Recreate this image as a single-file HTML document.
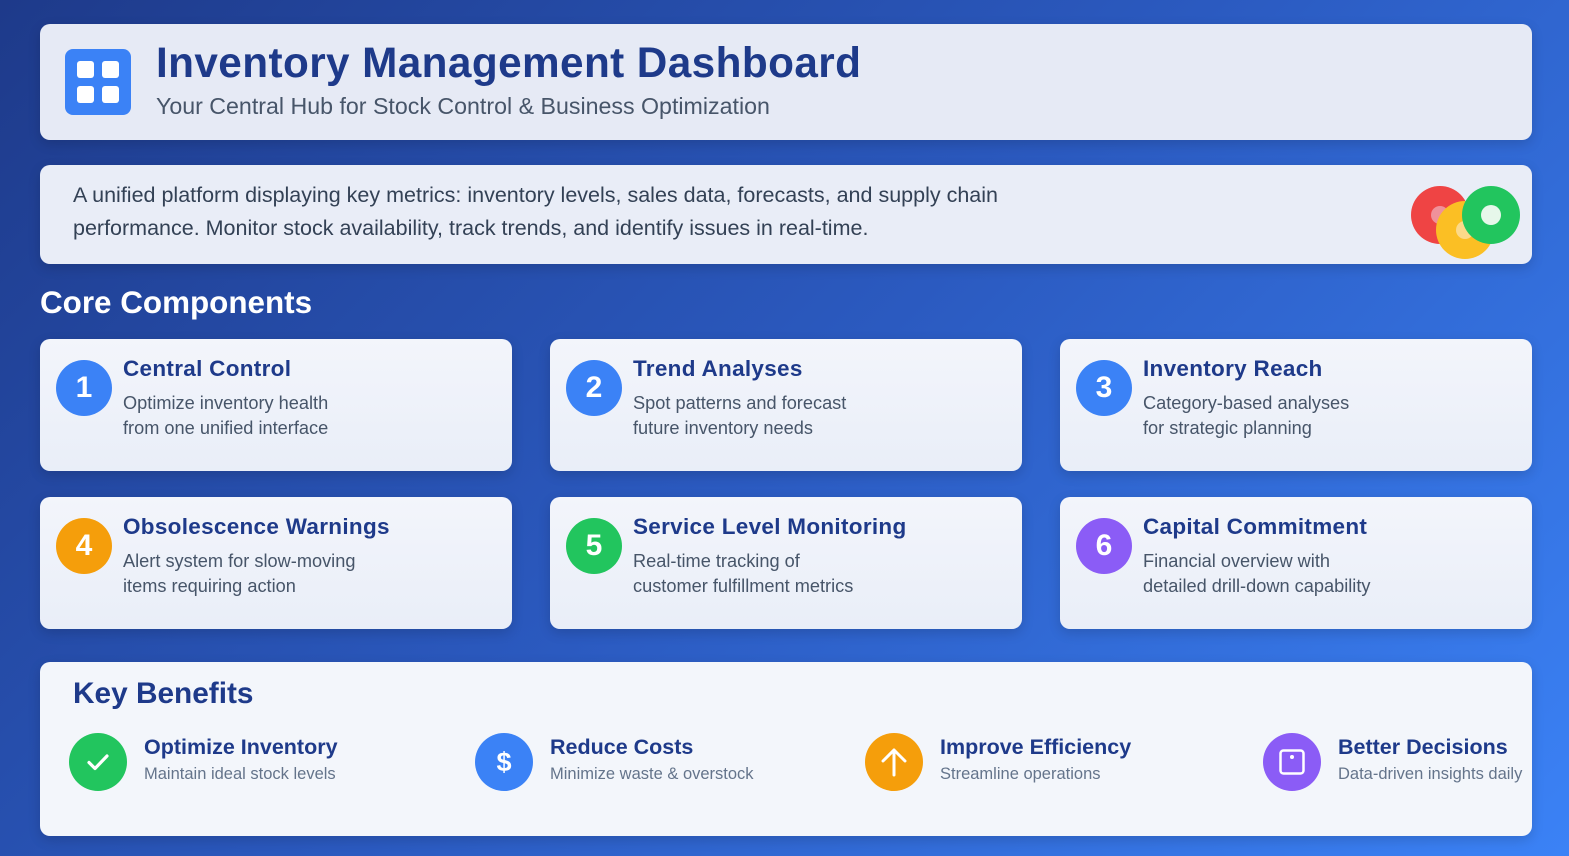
<!DOCTYPE html>
<html><head><meta charset="utf-8"><style>
*{margin:0;padding:0;box-sizing:border-box}
body{width:1569px;height:856px;overflow:hidden;font-family:"Liberation Sans",sans-serif;background:linear-gradient(135deg,#1e3a8a 0%,#2b5ac0 50%,#3b82f6 100%);position:relative}
.box{position:absolute;background:linear-gradient(180deg,#f3f5fb,#e9eef8);border-radius:10px;box-shadow:0 4px 12px rgba(0,0,0,.15)}
.abs{position:absolute;white-space:nowrap}
.num{position:absolute;width:56px;height:56px;border-radius:50%;color:#fff;font-weight:bold;font-size:30px;display:flex;align-items:center;justify-content:center}
.ct{position:absolute;left:83px;top:17px;font-size:22.5px;font-weight:bold;color:#1e3a8a;letter-spacing:.3px}
.cd{position:absolute;left:83px;top:52px;font-size:18.2px;color:#475569;line-height:25px}
.bi{position:absolute;width:58px;height:58px;border-radius:50%;display:flex;align-items:center;justify-content:center}
.bt{position:absolute;font-size:21.5px;font-weight:bold;color:#1e3a8a;white-space:nowrap}
.bd{position:absolute;font-size:16.5px;color:#64748b;white-space:nowrap}
</style></head><body>
<div class="box" style="left:40px;top:24px;width:1492px;height:116px;background:#e6eaf5"></div>
<div class="abs" style="left:65px;top:49px;width:66px;height:66px;background:#3b82f6;border-radius:8px">
 <div style="position:absolute;left:12px;top:12px;width:17px;height:17px;background:#fff;border-radius:3px"></div>
 <div style="position:absolute;left:37px;top:12px;width:17px;height:17px;background:#fff;border-radius:3px"></div>
 <div style="position:absolute;left:12px;top:37px;width:17px;height:17px;background:#fff;border-radius:3px"></div>
 <div style="position:absolute;left:37px;top:37px;width:17px;height:17px;background:#fff;border-radius:3px"></div>
</div>
<div class="abs" style="left:156px;top:39px;font-size:42.3px;font-weight:bold;color:#1e3a8a;letter-spacing:.4px">Inventory Management Dashboard</div>
<div class="abs" style="left:156px;top:93px;font-size:23.2px;color:#475569">Your Central Hub for Stock Control &amp; Business Optimization</div>

<div class="box" style="left:40px;top:165px;width:1492px;height:99px;background:#e9edf7"></div>
<div class="abs" style="left:73px;top:179px;font-size:21.5px;color:#334155;line-height:33px">A unified platform displaying key metrics: inventory levels, sales data, forecasts, and supply chain<br>performance. Monitor stock availability, track trends, and identify issues in real-time.</div>
<svg class="abs" style="left:1400px;top:180px" width="130" height="85">
<circle cx="40" cy="35" r="29" fill="#ef4444"/><circle cx="40" cy="35" r="9" fill="#f0919a"/>
<circle cx="65" cy="50" r="29" fill="#fbbf24"/><circle cx="65" cy="50" r="9" fill="#fcd989"/>
<circle cx="91" cy="35" r="29" fill="#22c55e"/><circle cx="91" cy="35" r="10" fill="#e6f7ea"/>
</svg>

<div class="abs" style="left:40px;top:285px;font-size:31.4px;font-weight:bold;color:#fff">Core Components</div>

<div class="box" style="left:40px;top:339px;width:472px;height:132px"><div class="num" style="left:16px;top:21px;background:#3b82f6">1</div><div class="ct">Central Control</div><div class="cd">Optimize inventory health<br>from one unified interface</div></div>
<div class="box" style="left:550px;top:339px;width:472px;height:132px"><div class="num" style="left:16px;top:21px;background:#3b82f6">2</div><div class="ct">Trend Analyses</div><div class="cd">Spot patterns and forecast<br>future inventory needs</div></div>
<div class="box" style="left:1060px;top:339px;width:472px;height:132px"><div class="num" style="left:16px;top:21px;background:#3b82f6">3</div><div class="ct">Inventory Reach</div><div class="cd">Category-based analyses<br>for strategic planning</div></div>
<div class="box" style="left:40px;top:497px;width:472px;height:132px"><div class="num" style="left:16px;top:21px;background:#f59e0b">4</div><div class="ct">Obsolescence Warnings</div><div class="cd">Alert system for slow-moving<br>items requiring action</div></div>
<div class="box" style="left:550px;top:497px;width:472px;height:132px"><div class="num" style="left:16px;top:21px;background:#22c55e">5</div><div class="ct">Service Level Monitoring</div><div class="cd">Real-time tracking of<br>customer fulfillment metrics</div></div>
<div class="box" style="left:1060px;top:497px;width:472px;height:132px"><div class="num" style="left:16px;top:21px;background:#8b5cf6">6</div><div class="ct">Capital Commitment</div><div class="cd">Financial overview with<br>detailed drill-down capability</div></div>

<div class="box" style="left:40px;top:662px;width:1492px;height:174px;background:#f3f6fb"></div>
<div class="abs" style="left:73px;top:677px;font-size:29.8px;font-weight:bold;color:#1e3a8a">Key Benefits</div>

<div class="bi" style="left:69px;top:733px;background:#22c55e"><svg width="30" height="30" viewBox="0 0 30 30"><path d="M6 15.5l6 6L24 9" fill="none" stroke="#fff" stroke-width="3.2" stroke-linecap="round" stroke-linejoin="round"/></svg></div>
<div class="bt" style="left:144px;top:735px">Optimize Inventory</div><div class="bd" style="left:144px;top:765px">Maintain ideal stock levels</div>

<div class="bi" style="left:475px;top:733px;background:#3b82f6;color:#fff;font-weight:bold;font-size:27px">$</div>
<div class="bt" style="left:550px;top:735px">Reduce Costs</div><div class="bd" style="left:550px;top:765px">Minimize waste &amp; overstock</div>

<div class="bi" style="left:865px;top:733px;background:#f59e0b"><svg width="34" height="34" viewBox="0 0 34 34"><path d="M17 30V5M6 16L17 5l11 11" fill="none" stroke="#fff" stroke-width="3" stroke-linecap="round" stroke-linejoin="round"/></svg></div>
<div class="bt" style="left:940px;top:735px">Improve Efficiency</div><div class="bd" style="left:940px;top:765px">Streamline operations</div>

<div class="bi" style="left:1263px;top:733px;background:#8b5cf6"><svg width="30" height="30" viewBox="0 0 30 30"><rect x="3.5" y="3.5" width="23" height="23" rx="3" fill="none" stroke="#fff" stroke-width="2.5"/><circle cx="15" cy="10" r="2" fill="#fff"/></svg></div>
<div class="bt" style="left:1338px;top:735px">Better Decisions</div><div class="bd" style="left:1338px;top:765px">Data-driven insights daily</div>
</body></html>
